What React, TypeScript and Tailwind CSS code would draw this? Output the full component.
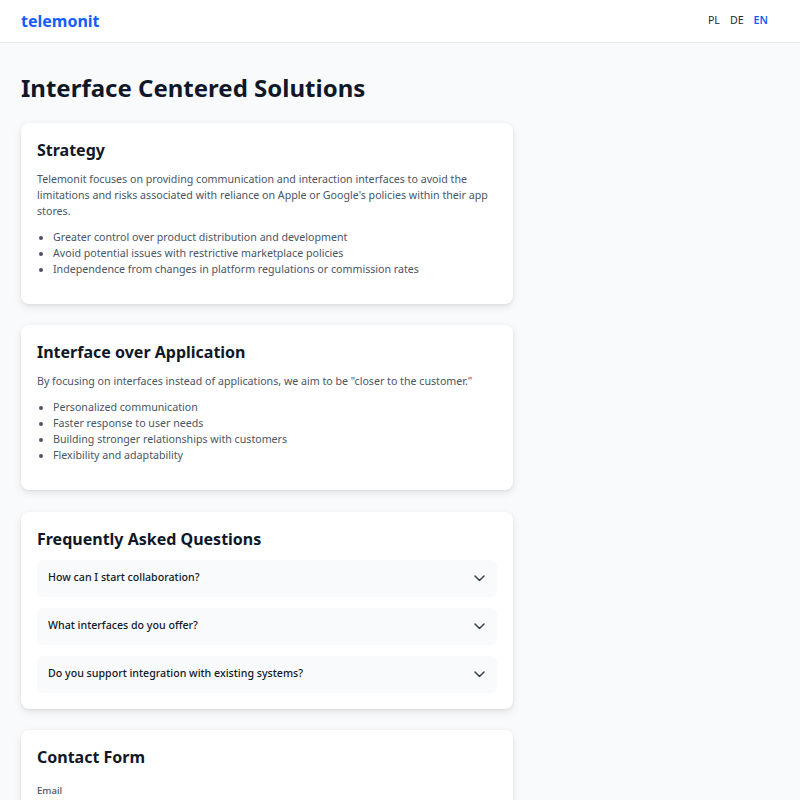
import React, { useState } from 'react'

interface FaqItem {
  question: string
  answer: string
}

const faqs: FaqItem[] = [
  {
    question: 'How can I start collaboration?',
    answer: 'Send us a message through the contact form and we will get back to you.'
  },
  {
    question: 'What interfaces do you offer?',
    answer: 'We build web, messaging and voice interfaces tailored to your customers.'
  },
  {
    question: 'Do you support integration with existing systems?',
    answer: 'Yes, our interfaces connect with your current CRM, ERP and support tools.'
  }
]

const languages: string[] = ['PL', 'DE', 'EN']

const Chevron: React.FC<{ open: boolean }> = ({ open }) => (
  <svg
    viewBox="0 0 11 7"
    className={`w-[11px] h-[7px] text-gray-700 ${open ? 'rotate-180' : ''}`}
    fill="none"
    stroke="currentColor"
    strokeWidth={1.5}
    strokeLinecap="round"
    strokeLinejoin="round"
  >
    <polyline points="1,1 5.5,5.5 10,1" />
  </svg>
)

const Card: React.FC<{ title: string; children: React.ReactNode }> = ({ title, children }) => (
  <section className="w-[492px] bg-white rounded-lg shadow-[0_3px_8px_rgba(0,0,0,0.09),0_1px_3px_rgba(0,0,0,0.06)] p-4">
    <h2 className="text-[16px] leading-[22px] font-bold text-gray-900 mb-[10px]">{title}</h2>
    {children}
  </section>
)

const BulletList: React.FC<{ items: string[] }> = ({ items }) => (
  <ul className="list-disc pl-4 mb-[11px] text-gray-600 marker:text-gray-600">
    {items.map((item: string) => (
      <li key={item} className="leading-4">{item}</li>
    ))}
  </ul>
)

export default function App() {
  const [lang, setLang] = useState<string>('EN')
  const [openFaq, setOpenFaq] = useState<number | null>(null)

  return (
    <div className="h-screen overflow-y-auto bg-gray-50 text-[10.65px] font-['Noto_Sans',sans-serif]">
      <header className="h-[43px] bg-white border-b border-gray-200 flex items-center justify-between pl-[21px] pr-[32px]">
        <span className="text-[16px] font-bold text-blue-600">telemonit</span>
        <nav className="flex items-center gap-[10px]">
          {languages.map((code: string) => (
            <button
              key={code}
              onClick={() => setLang(code)}
              className={code === lang ? 'font-semibold text-blue-600' : 'text-gray-800'}
            >
              {code}
            </button>
          ))}
        </nav>
      </header>

      <main className="px-[21px] pt-[32px] pb-10">
        <h1 className="text-[24px] leading-[26px] font-bold text-gray-900 mb-[22px]">
          Interface Centered Solutions
        </h1>

        <div className="flex flex-col gap-[21.4px]">
          <Card title="Strategy">
            <p className="leading-4 text-gray-600 mb-[10px]">
              Telemonit focuses on providing communication and interaction interfaces to avoid the
              limitations and risks associated with reliance on Apple or Google's policies within their app
              stores.
            </p>
            <BulletList
              items={[
                'Greater control over product distribution and development',
                'Avoid potential issues with restrictive marketplace policies',
                'Independence from changes in platform regulations or commission rates'
              ]}
            />
          </Card>

          <Card title="Interface over Application">
            <p className="leading-4 text-gray-600 mb-[10px]">
              By focusing on interfaces instead of applications, we aim to be "closer to the customer."
            </p>
            <BulletList
              items={[
                'Personalized communication',
                'Faster response to user needs',
                'Building stronger relationships with customers',
                'Flexibility and adaptability'
              ]}
            />
          </Card>

          <Card title="Frequently Asked Questions">
            <div className="flex flex-col gap-[11px]">
              {faqs.map((faq: FaqItem, i: number) => (
                <div key={faq.question} className="bg-gray-50 rounded-md">
                  <button
                    onClick={() => setOpenFaq(openFaq === i ? null : i)}
                    className="w-full h-[37px] flex items-center justify-between pl-[11px] pr-[12px] text-left font-medium text-gray-900"
                  >
                    <span>{faq.question}</span>
                    <Chevron open={openFaq === i} />
                  </button>
                  {openFaq === i && (
                    <p className="px-[11px] pb-3 leading-4 text-gray-600">{faq.answer}</p>
                  )}
                </div>
              ))}
            </div>
          </Card>

          <Card title="Contact Form">
            <form className="flex flex-col gap-3 pt-[6px]" onSubmit={e => e.preventDefault()}>
              <div>
                <label className="block text-[9.6px] leading-[13px] font-medium text-gray-600 mb-1">Email</label>
                <input
                  type="email"
                  className="w-full h-[30px] border border-gray-300 rounded-md px-2 outline-none"
                />
              </div>
              <div>
                <label className="block text-[9.6px] leading-[13px] font-medium text-gray-600 mb-1">Message</label>
                <textarea rows={4} className="w-full border border-gray-300 rounded-md px-2 py-1 outline-none" />
              </div>
              <button className="self-start bg-blue-600 text-white font-medium rounded-md px-4 py-2">
                Send
              </button>
            </form>
          </Card>
        </div>
      </main>
    </div>
  )
}
